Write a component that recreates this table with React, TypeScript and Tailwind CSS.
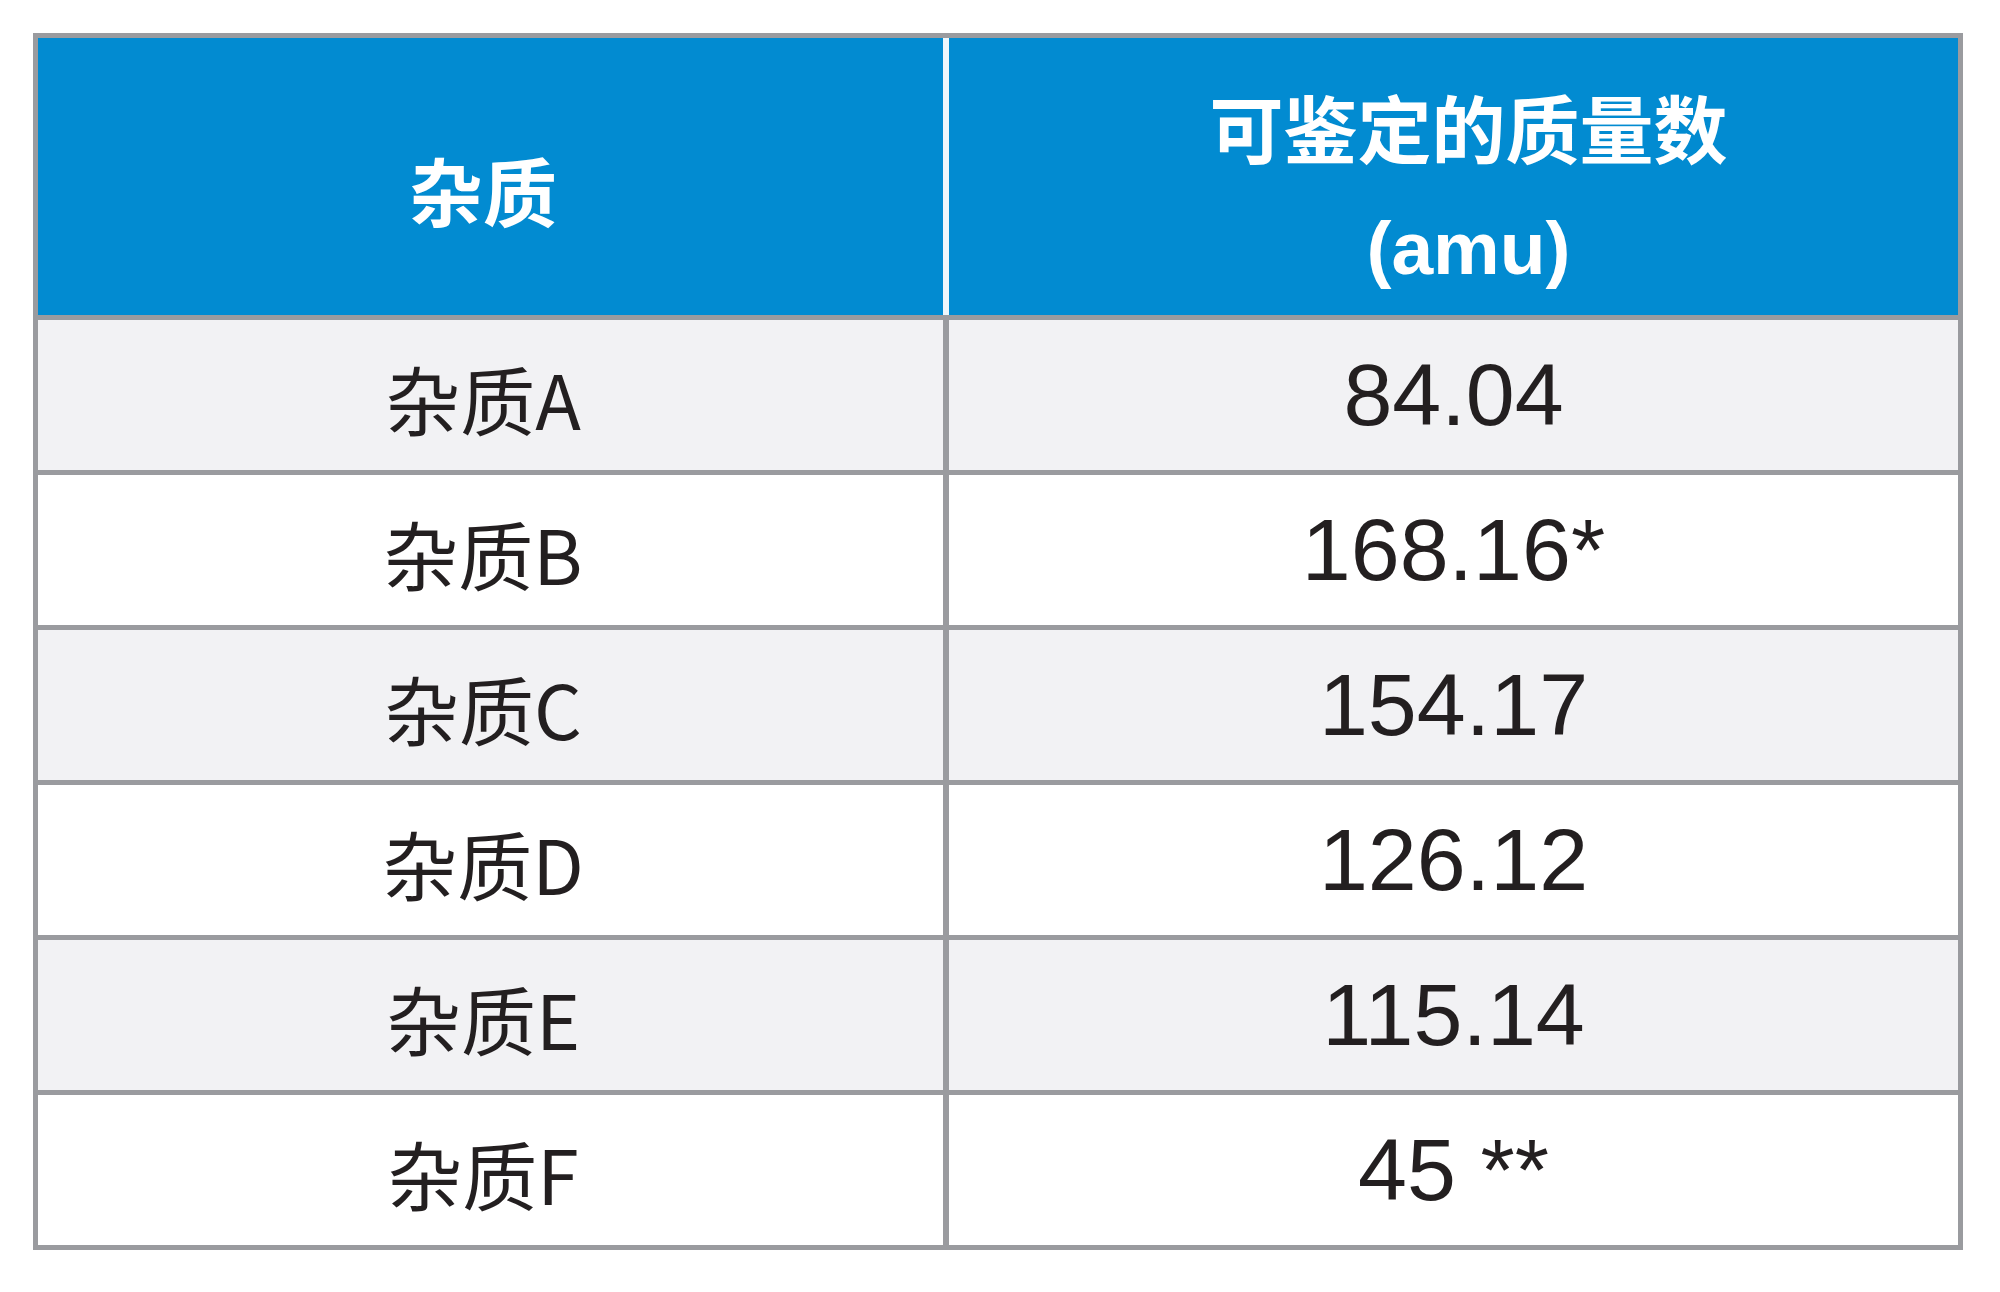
const ROWS = [
  { name: "杂质A", mass: "84.04" },
  { name: "杂质B", mass: "168.16*" },
  { name: "杂质C", mass: "154.17" },
  { name: "杂质D", mass: "126.12" },
  { name: "杂质E", mass: "115.14" },
  { name: "杂质F", mass: "45 **" },
];

const cjk = "font-['Noto_Sans_CJK_SC',sans-serif]";
const latin = "font-['Liberation_Sans','Noto_Sans_CJK_SC',sans-serif]";

export default function App() {
  return (
    <div className="min-h-screen bg-white pl-[33px] pt-[33px]">
      <div className="flex w-[1930px] flex-col border-[5px] border-[#9a9b9f]">
        {/* header */}
        <div className="flex h-[277px] bg-[#028bd1] text-white">
          <div
            className={`flex w-[905px] items-center justify-center pr-[15px] pt-[24px] text-[74px] leading-none font-bold ${cjk}`}
          >
            杂质
          </div>
          <div className="w-[6px] bg-[#eef7fc]" />
          <div className="flex flex-1 flex-col items-center justify-center pl-[30px] pt-[20px] font-bold">
            <div className={`text-[74px] leading-[122px] ${cjk}`}>可鉴定的质量数</div>
            <div className={`text-[75px] leading-[122px] ${latin}`}>(amu)</div>
          </div>
        </div>

        {ROWS.map((r, i) => (
          <div
            key={r.name}
            className={`flex h-[155px] border-t-[5px] border-[#9a9b9f] text-[#231f20] ${
              i % 2 === 0 ? "bg-[#f2f2f4]" : "bg-white"
            }`}
          >
            <div
              className={`flex w-[905px] items-center justify-center pr-[15px] pt-[4px] text-[75px] leading-none ${cjk}`}
            >
              {r.name}
            </div>
            <div
              className={`flex flex-1 items-center justify-center border-l-[6px] border-[#9a9b9f] text-[88px] leading-none whitespace-pre ${latin}`}
            >
              {r.mass}
            </div>
          </div>
        ))}
      </div>
    </div>
  );
}
